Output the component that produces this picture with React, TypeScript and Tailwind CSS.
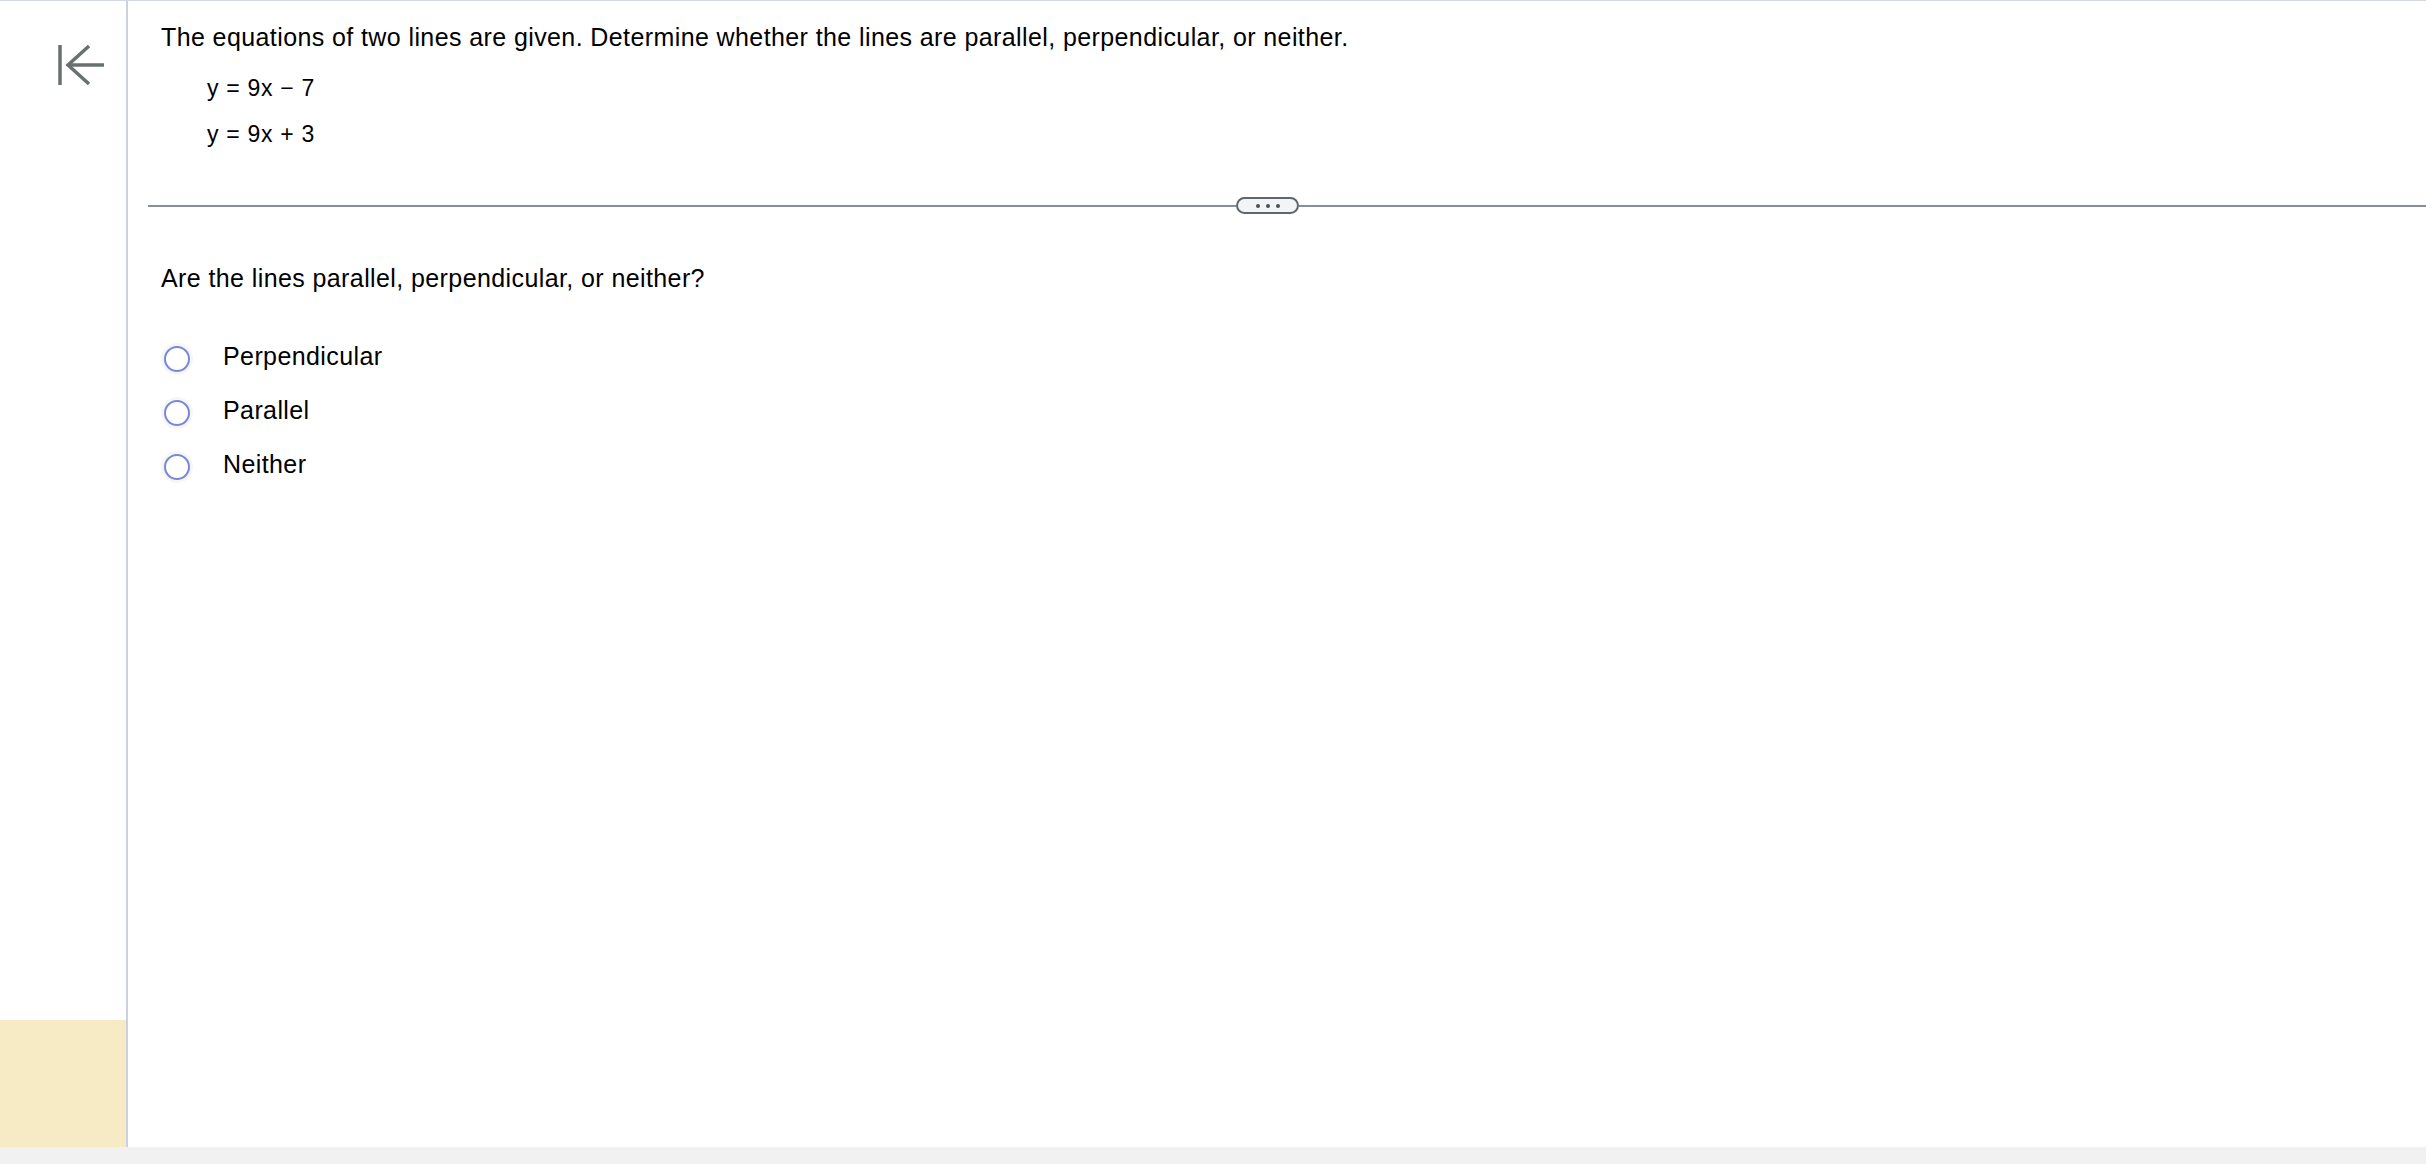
import React from 'react';

const OPTIONS = ['Perpendicular', 'Parallel', 'Neither'];

function CollapseIcon() {
  return (
    <svg width="50" height="44" viewBox="0 0 50 44" fill="none" className="ml-[57px] mt-[42px]">
      <line x1="3" y1="2" x2="3" y2="42" stroke="#687070" strokeWidth="3.5" />
      <line x1="11" y1="22" x2="47" y2="22" stroke="#687070" strokeWidth="3.5" />
      <polyline points="32,3 11,22 32,41" stroke="#687070" strokeWidth="3.5" fill="none" />
    </svg>
  );
}

export default function App() {
  return (
    <div className="flex h-[1164px] w-full flex-col bg-white font-['Liberation_Sans',Arial,sans-serif] text-black">
      <div className="flex flex-1 border-t border-[#d3d8e2]">
        {/* Sidebar */}
        <aside className="flex w-[128px] shrink-0 flex-col justify-between border-r-2 border-[#ccd1e1]">
          <CollapseIcon />
          <div className="h-[127px] bg-[#f7ebc5]" />
        </aside>

        {/* Question */}
        <main className="flex-1 pt-[22px]">
          <p className="pl-[33px] text-[25px] leading-[28px] tracking-[0.4px]">
            The equations of two lines are given. Determine whether the lines are parallel, perpendicular, or neither.
          </p>
          <div className="mt-[14px] pl-[79px] text-[23px] leading-[46px] tracking-[0.7px]">
            <div>y = 9x − 7</div>
            <div>y = 9x + 3</div>
          </div>

          <div className="ml-[20px] mt-[40px] flex h-[17px] items-center">
            <div className="h-[2px] w-[1088px] bg-[#878e9c]" />
            <div className="flex h-[17px] w-[63px] items-center justify-center gap-[6px] rounded-full border-2 border-[#5f6670] bg-[#f3f4f6]">
              <span className="h-[4px] w-[4px] rounded-full bg-[#4b5058]" />
              <span className="h-[4px] w-[4px] rounded-full bg-[#4b5058]" />
              <span className="h-[4px] w-[4px] rounded-full bg-[#4b5058]" />
            </div>
            <div className="h-[2px] flex-1 bg-[#878e9c]" />
          </div>

          <p className="mt-[50px] pl-[33px] text-[25px] leading-[28px] tracking-[0.4px]">
            Are the lines parallel, perpendicular, or neither?
          </p>

          <div className="mt-[40px]">
            {OPTIONS.map((o) => (
              <label key={o} className="flex h-[54px] cursor-pointer items-center pl-[36px]">
                <span className="h-[26px] w-[26px] shrink-0 rounded-full border-2 border-[#7888d8] bg-white shadow-[0_0_0_3px_#f6f6f8]" />
                <span className="ml-[33px] pb-[6px] text-[25px] leading-[28px] tracking-[0.4px]">{o}</span>
              </label>
            ))}
          </div>
        </main>
      </div>
      <div className="h-[17px] bg-[#f1f1f1]" />
    </div>
  );
}
